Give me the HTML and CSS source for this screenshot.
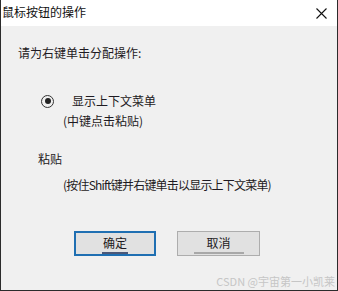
FILE: index.html
```html
<!DOCTYPE html>
<html lang="zh-CN">
<head>
<meta charset="utf-8">
<title>鼠标按钮的操作</title>
<link rel="stylesheet" href="styles.css">
</head>
<body>
<div class="window">
  <div class="titlebar">
    <span class="title">鼠标按钮的操作</span>
    <span class="close">
      <svg width="11" height="11" viewBox="0 0 11 11"><path d="M0.5 0.5 L10.5 10.5 M10.5 0.5 L0.5 10.5" stroke="#111" stroke-width="1.1" fill="none"/></svg>
    </span>
  </div>
  <div class="content">
    <div class="prompt">请为右键单击分配操作:</div>
    <div class="radio-row">
      <span class="radio"><span class="dot"></span></span>
      <span class="radio-label">显示上下文菜单</span>
    </div>
    <div class="hint hint-1">(中键点击粘贴)</div>
    <div class="paste">粘贴</div>
    <div class="hint hint-2">(按住Shift键并右键单击以显示上下文菜单)</div>
    <div class="buttons">
      <div class="btn btn-default"><span class="btn-text">确定</span><span class="btn-line line-ok"></span></div>
      <div class="btn"><span class="btn-text">取消</span><span class="btn-line line-cancel"></span></div>
    </div>
    <div class="watermark">CSDN @宇宙第一小凯莱</div>
  </div>
</div>
</body>
</html>
```
FILE: styles.css
```css
html, body {
  margin: 0;
  padding: 0;
  background: #f0f0f0;
}
body {
  font-family: "Noto Sans CJK SC", "Noto Sans", sans-serif;
  color: #1e1a22;
  font-size: 12px;
}
.window {
  width: 338px;
  height: 291px;
  box-sizing: border-box;
  border-left: 1px solid #2b2b2b;
  border-right: 1px solid #2b2b2b;
  border-bottom: 1px solid #2b2b2b;
  display: flex;
  flex-direction: column;
  overflow: hidden;
}
.titlebar {
  height: 26px;
  background: #ffffff;
  display: flex;
  align-items: center;
  justify-content: space-between;
  padding-left: 1px;
  padding-right: 10px;
  flex: none;
}
.title {
  font-size: 12px;
  line-height: 16px;
  color: #111;
  margin-top: -3px;
}
.close {
  display: flex;
  width: 11px;
  height: 11px;
}
.content {
  flex: 1;
  background: #f0f0f0;
  position: relative;
  padding-top: 19px;
}
.prompt {
  line-height: 16px;
  margin-left: 17px;
}
.radio-row {
  display: flex;
  align-items: center;
  height: 16px;
  margin-top: 32px;
  margin-left: 40px;
}
.radio {
  width: 11px;
  height: 11px;
  border: 1px solid #333;
  border-radius: 50%;
  display: flex;
  align-items: center;
  justify-content: center;
  box-sizing: content-box;
  background: #f0f0f0;
}
.dot {
  width: 6px;
  height: 6px;
  border-radius: 50%;
  background: #222;
}
.radio-label {
  margin-left: 18px;
  line-height: 16px;
}
.hint {
  line-height: 16px;
  margin-left: 62px;
}
.hint-1 {
  margin-top: 4px;
}
.paste {
  line-height: 16px;
  margin-top: 22px;
  margin-left: 37px;
}
.hint-2 {
  margin-top: 10px;
  letter-spacing: -0.8px;
}
.buttons {
  display: flex;
  gap: 21px;
  margin-top: 38px;
  margin-left: 73px;
}
.btn {
  width: 83px;
  height: 25px;
  box-sizing: border-box;
  border: 1px solid #adadad;
  background: #e1e1e1;
  display: flex;
  flex-direction: column;
  align-items: center;
  padding-top: 3px;
}
.btn-default {
  width: 82px;
  border: 2px solid #1f6fb2;
  padding-top: 2px;
}
.btn-text {
  line-height: 16px;
  font-size: 12px;
}
.btn-line {
  display: block;
  height: 2px;
  margin-top: 1px;
}
.line-ok {
  width: 26px;
  background: #4a5878;
}
.line-cancel {
  width: 50px;
  background: #a8a8a8;
}
.watermark {
  position: absolute;
  right: 2px;
  bottom: 2px;
  font-size: 11px;
  line-height: 14px;
  color: #c6c6c6;
}
```
